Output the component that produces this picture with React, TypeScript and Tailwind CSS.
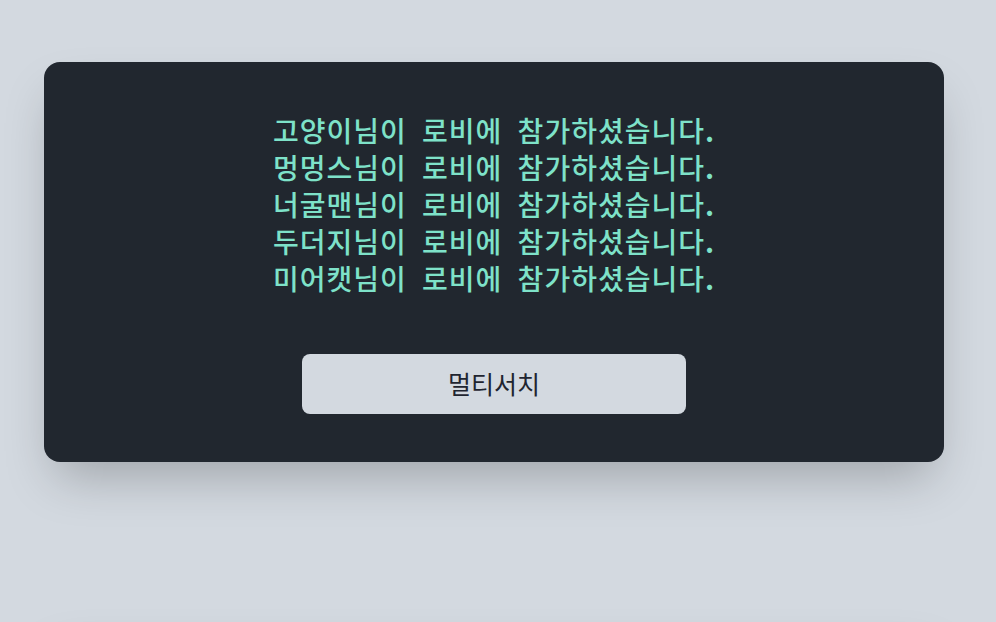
import React from "react";

const players = ["고양이", "멍멍스", "너굴맨", "두더지", "미어캣"];

const App: React.FC = () => {
  return (
    <div className="min-h-screen bg-[#d3d9e0] px-[44px] pt-[62px] pb-16 flex flex-col gap-[162px]">
      <div className="w-[900px] rounded-2xl bg-[#21272f] px-12 pt-[50px] pb-12 shadow-2xl flex flex-col items-center">
        <div
          className="flex flex-col items-center text-[28px] leading-[37px] font-medium tracking-[1px] [word-spacing:8px] text-[#7ee2c9]"
          style={{ fontFamily: '"Noto Sans CJK KR", sans-serif' }}
        >
          {players.map((name) => (
            <p key={name}>
              {name}님이 로비에 참가하셨습니다<span className="font-bold">.</span>
            </p>
          ))}
        </div>
        <button
          className="mt-[57px] w-96 h-[60px] rounded-lg bg-[#d3d9e0] text-[25px] text-[#1f2530]"
          style={{ fontFamily: '"Noto Sans CJK KR", sans-serif' }}
        >
          멀티서치
        </button>
      </div>
      <div className="w-[900px] h-[300px] rounded-2xl bg-[#d3d9e0] shadow-2xl" />
    </div>
  );
};

export default App;
